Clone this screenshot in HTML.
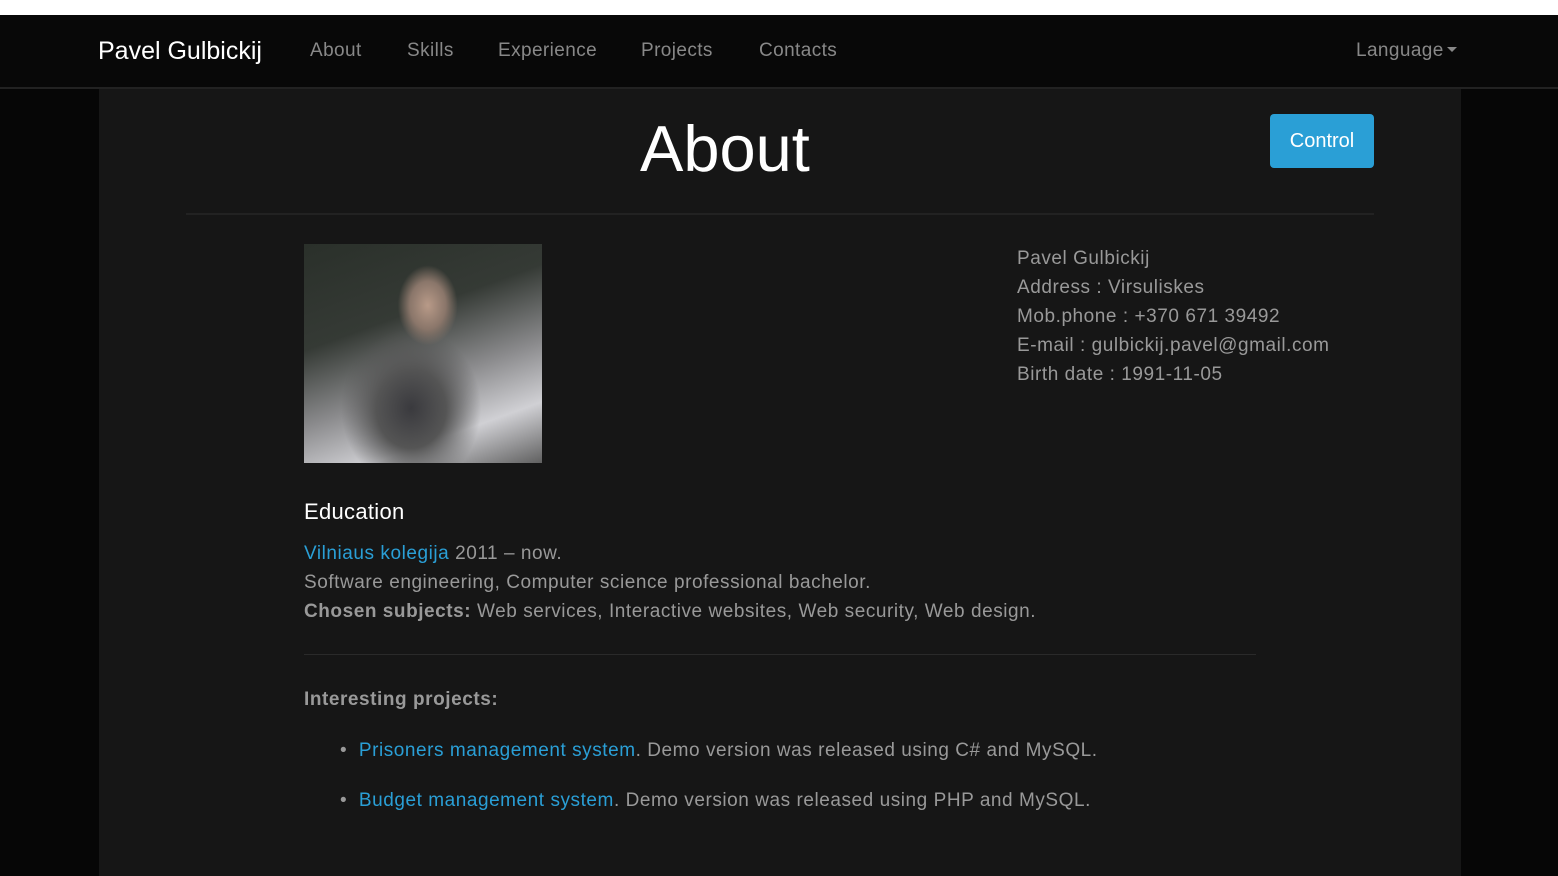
<!DOCTYPE html>
<html><head><meta charset="utf-8"><style>
body{margin:0;background:#060606;font-family:"Liberation Sans",sans-serif;width:1558px;height:876px;overflow:hidden;position:relative}
.top{position:absolute;left:0;top:0;width:1558px;height:15px;background:#fff}
.nav{position:absolute;left:0;top:15px;width:1558px;height:72px;background:#080808;border-bottom:2px solid #222}
.nav span{position:absolute;top:25px;font-size:19px;color:#888;letter-spacing:0.4px}
.brand{color:#fff!important;font-size:25px!important;top:22px!important;letter-spacing:0!important}
.cont{position:absolute;left:99px;top:89px;width:1362px;height:787px;background:#161616}
.a{position:absolute;white-space:nowrap}
.info{color:#999;font-size:19px;line-height:29px;letter-spacing:0.55px}
.lk{color:#2a9fd6}
</style></head><body>
<div class="top"></div>
<div class="nav">
<span class="brand" style="left:98px">Pavel Gulbickij</span>
<span style="left:310px">About</span><span style="left:407px">Skills</span><span style="left:498px">Experience</span><span style="left:641px">Projects</span><span style="left:759px">Contacts</span>
<span style="left:1356px">Language<span style="position:relative;top:-4px;display:inline-block;margin-left:3px;border-left:5px solid transparent;border-right:5px solid transparent;border-top:5px solid #888"></span></span>
</div>
<div class="cont"></div>
<div class="a" style="left:640px;top:111px;font-size:65px;color:#fff">About</div>
<div class="a" style="left:1270px;top:114px;width:104px;height:54px;background:#2a9fd6;border-radius:4px;color:#fff;font-size:20px;line-height:54px;text-align:center">Control</div>
<div class="a" style="left:186px;top:213px;width:1188px;height:2px;background:#222"></div>
<div class="a" style="left:304px;top:244px;width:238px;height:219px;background:radial-gradient(ellipse 30px 40px at 52% 28%,#b89a88 0,#8a766a 60%,transparent 100%),radial-gradient(ellipse 70px 80px at 45% 75%,#3a3a3e 0,#555 50%,transparent 100%),linear-gradient(160deg,#2a302a 0%,#353a35 35%,#8a8a8c 60%,#d0d0d4 80%,#606060 100%)"></div>
<div class="a info" style="left:1017px;top:244px">Pavel Gulbickij<br>Address : Virsuliskes<br>Mob.phone : +370 671 39492<br>E-mail : gulbickij.pavel@gmail.com<br>Birth date : 1991-11-05</div>
<div class="a" style="left:304px;top:499px;font-size:22px;color:#fff;letter-spacing:0.3px">Education</div>
<div class="a info" style="left:304px;top:539px"><span class="lk">Vilniaus kolegija</span> 2011 – now.<br>Software engineering, Computer science professional bachelor.<br><b>Chosen subjects:</b> Web services, Interactive websites, Web security, Web design.</div>
<div class="a" style="left:304px;top:654px;width:952px;height:1px;background:#2a2a2a"></div>
<div class="a info" style="left:304px;top:685px"><b>Interesting projects:</b></div>
<div class="a info" style="left:340px;top:736px">•&nbsp;&nbsp;<span class="lk">Prisoners management system</span>. Demo version was released using C# and MySQL.</div>
<div class="a info" style="left:340px;top:786px">•&nbsp;&nbsp;<span class="lk">Budget management system</span>. Demo version was released using PHP and MySQL.</div>
</body></html>
